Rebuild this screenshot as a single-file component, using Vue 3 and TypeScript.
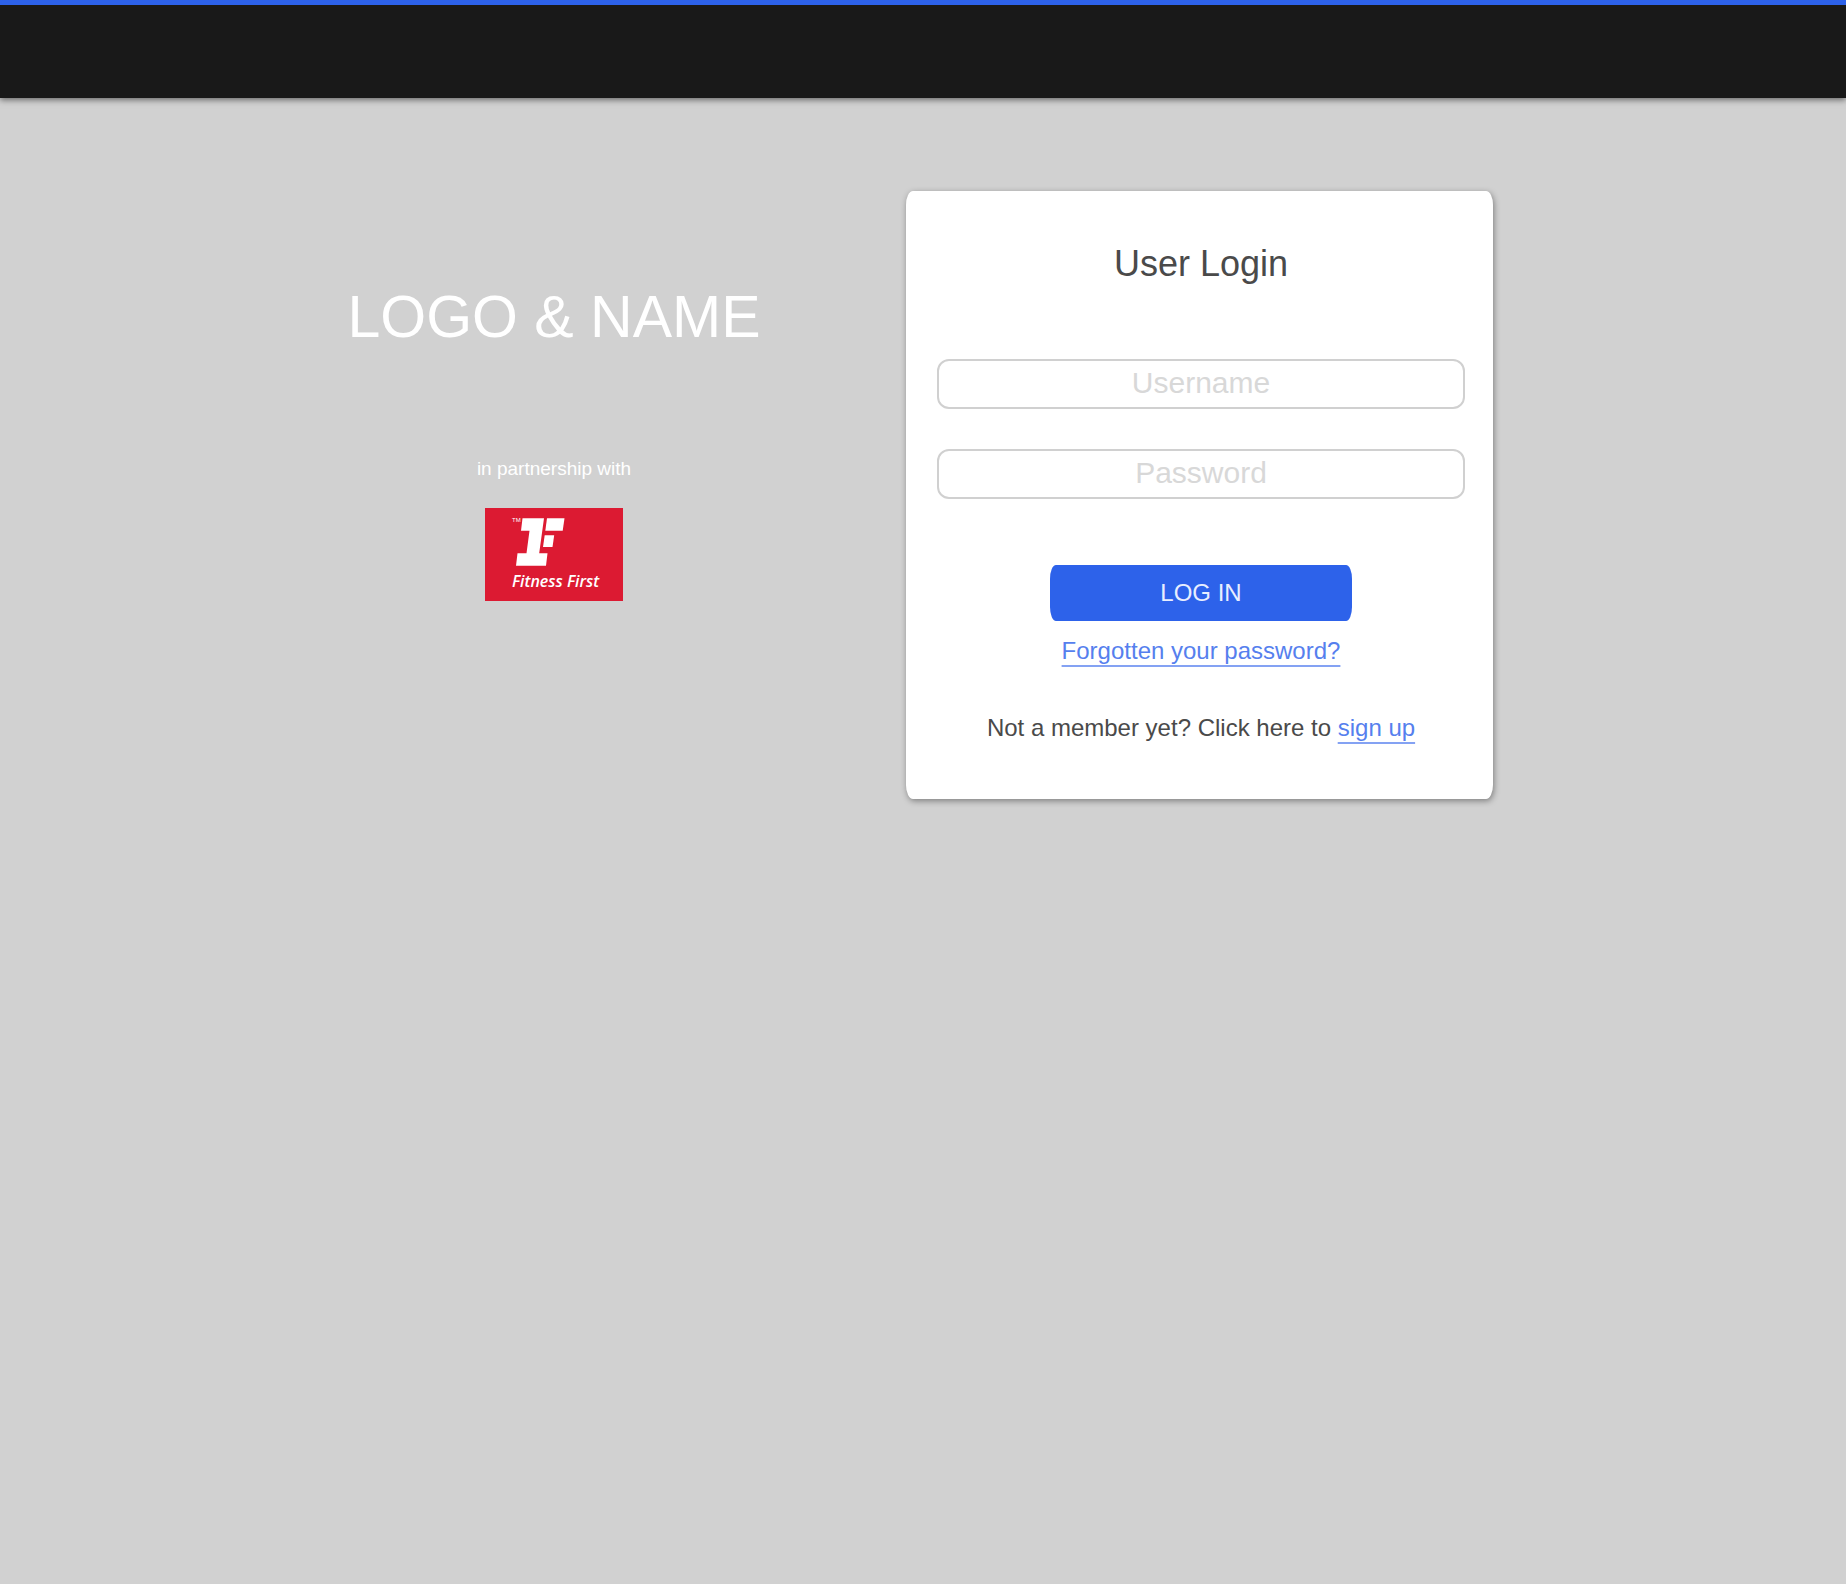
<script setup lang="ts">
import { ref } from 'vue'

const username = ref('')
const password = ref('')
</script>

<template>
  <div class="page">
    <header class="topbar"></header>
    <main class="content">
      <section class="brand">
        <h1 class="brand-name">LOGO &amp; NAME</h1>
        <p class="partner-label">in partnership with</p>
        <svg class="partner-logo" viewBox="0 0 138 93" role="img" aria-label="Fitness First">
          <rect width="138" height="93" fill="#dc1a32" />
          <g fill="#fff">
            <path d="M37.500 10.300H59L54.200 45.300H62.500L61 57.700H31L32.500 45.300H41.500L44.500 22.700H36Z" />
            <path d="M62 10.300H79.500L77.700 22.700H60.300Z" />
            <path d="M59.700 27.300H69.200L67.500 39H58Z" />
            <text x="27" y="14" class="logo-tm">TM</text>
            <text x="27" y="79" class="logo-text">Fitness First</text>
          </g>
        </svg>
      </section>

      <form class="card" @submit.prevent>
        <h2 class="card-title">User Login</h2>
        <div class="fields">
          <input v-model="username" class="field" type="text" placeholder="Username" aria-label="Username" />
          <input v-model="password" class="field" type="password" placeholder="Password" aria-label="Password" />
        </div>
        <button class="submit" type="submit">LOG IN</button>
        <a class="link" href="#forgot">Forgotten your password?</a>
        <p class="signup">Not a member yet? Click here to <a class="link" href="#signup">sign up</a></p>
      </form>
    </main>
  </div>
</template>

<style>
body {
  margin: 0;
  background: #d1d1d1;
}
</style>

<style scoped>
.page {
  min-height: 100vh;
  background: #d1d1d1;
  font-family: "Liberation Sans", Arial, sans-serif;
  color: #4a4a4a;
}

.topbar {
  box-sizing: border-box;
  height: 98px;
  border-top: 5px solid #2d62ea;
  background: #191919;
  box-shadow: 0 2px 6px rgba(0, 0, 0, 0.5);
}

.content {
  display: flex;
  justify-content: space-between;
  align-items: flex-start;
  max-width: 1140px;
  margin: 0 auto;
  padding-top: 93px;
}

.brand {
  display: flex;
  flex: 0 0 402px;
  flex-direction: column;
  align-items: center;
  min-width: 0;
  padding-top: 92px;
  color: #fff;
}

.brand-name {
  margin: 0;
  font-size: 59px;
  font-weight: 400;
  line-height: 68px;
  white-space: nowrap;
}

.partner-label {
  margin: 106px 0 27px;
  font-size: 19px;
  line-height: 24px;
}

.partner-logo {
  display: block;
  width: 138px;
  height: 93px;
}

.logo-text {
  font: italic 600 16px "Open Sans", sans-serif;
}

.logo-tm {
  font: 6px "Liberation Sans", Arial, sans-serif;
}

.card {
  box-sizing: border-box;
  display: flex;
  flex: 0 1 587px;
  flex-direction: column;
  align-items: center;
  padding: 52px 28px 56px 31px;
  border-radius: 7px / 14px;
  background: #fff;
  box-shadow: 1px 2px 6px rgba(0, 0, 0, 0.4);
}

.card-title {
  margin: 0;
  font-size: 36px;
  font-weight: 400;
  line-height: 42px;
}

.fields {
  display: flex;
  flex-direction: column;
  gap: 40px;
  width: 100%;
  margin: 74px 0 66px;
}

.field {
  box-sizing: border-box;
  width: 100%;
  height: 50px;
  padding: 0 12px 2px;
  border: 2px solid #d0d0d0;
  border-radius: 12px;
  background: #fff;
  color: #4a4a4a;
  font: inherit;
  font-size: 30px;
  text-align: center;
}

.field::placeholder {
  color: #d8d8d8;
  opacity: 1;
}

.submit {
  width: 302px;
  height: 56px;
  margin-bottom: 15px;
  padding: 0;
  border: 0;
  border-radius: 6px / 14px;
  background: #2d62ea;
  color: #e8eeff;
  font: inherit;
  font-size: 24px;
}

.link {
  color: #567fee;
  font-size: 24px;
  line-height: 30px;
  text-decoration: underline;
  text-decoration-color: #84a2f3;
  text-decoration-thickness: 2px;
  text-decoration-skip-ink: none;
  text-underline-offset: 6px;
}

.signup {
  margin: 47px 0 0;
  font-size: 24px;
  line-height: 30px;
}
</style>
